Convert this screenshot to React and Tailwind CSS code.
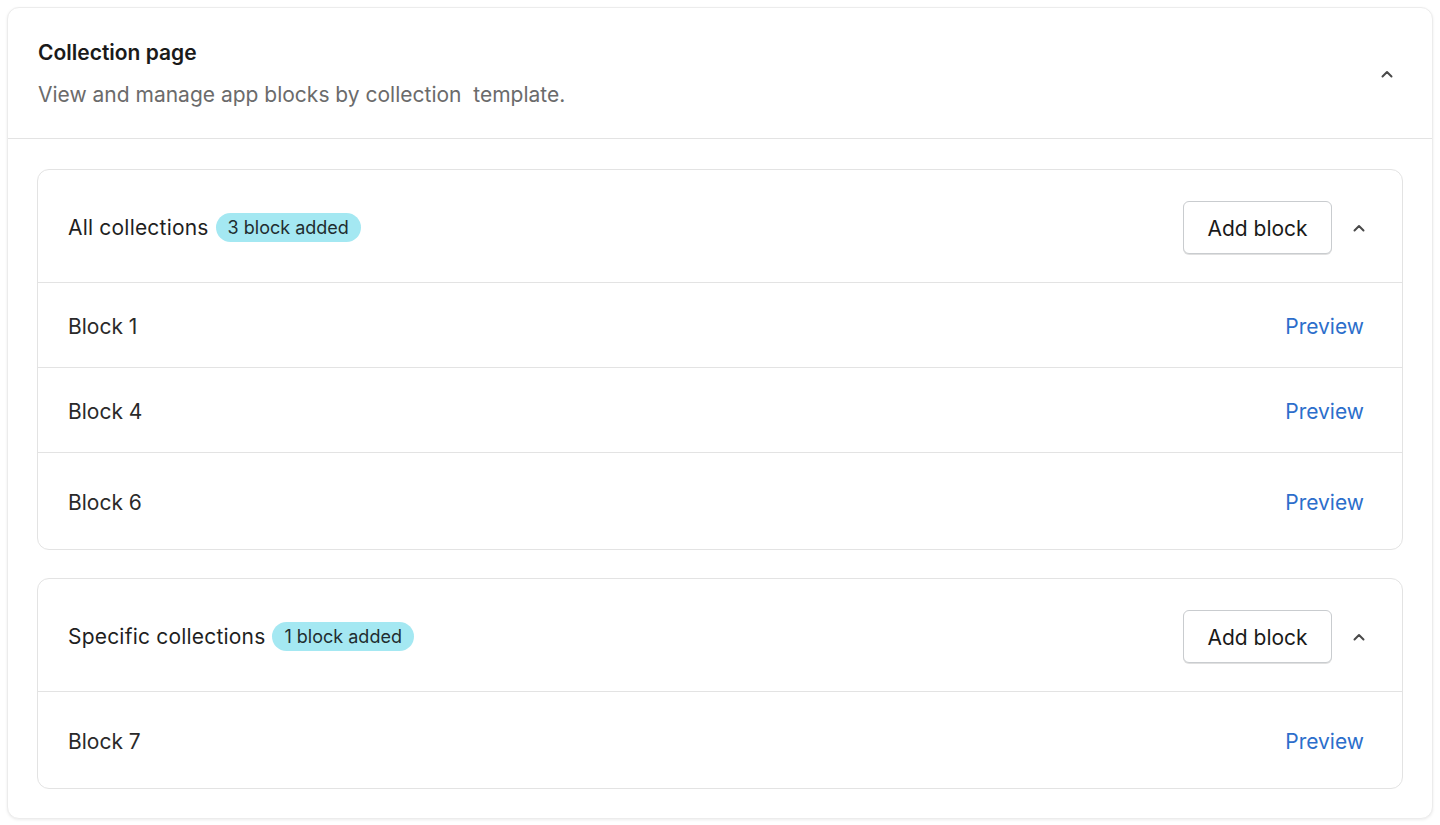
const blockGroups = [
  {
    id: "all",
    title: "All collections",
    badge: "3 block added",
    blocks: ["Block 1", "Block 4", "Block 6"],
  },
  {
    id: "specific",
    title: "Specific collections",
    badge: "1 block added",
    blocks: ["Block 7"],
  },
];

function ChevronUp({ className = "" }) {
  return (
    <svg
      className={className}
      width="14"
      height="14"
      viewBox="0 0 14 14"
      fill="none"
      stroke="currentColor"
      strokeWidth="2"
      strokeLinecap="round"
      strokeLinejoin="round"
    >
      <path d="M2.5 9.5 7 5l4.5 4.5" />
    </svg>
  );
}

function BlockGroup({ group }) {
  return (
    <div className="rounded-[12px] border border-[#e3e3e3] bg-white">
      {/* Group header */}
      <div className="flex h-[113px] items-center justify-between border-b border-[#e3e3e3] pl-[30px] pr-[36px] pt-[3px]">
        <div className="flex items-center gap-[7px]">
          <span className="text-[21px] leading-[28px] tracking-[0.2px] text-[#1f1f1f]">{group.title}</span>
          <span className="rounded-full bg-[#a4e8f2] px-[12px] text-[18px] leading-[29px] text-[#1f2d30]">
            {group.badge}
          </span>
        </div>
        <div className="flex items-center gap-[20px]">
          <button className="h-[53px] w-[149px] rounded-[6px] border border-[#c9cccf] bg-white pt-[2px] text-[21px] text-[#1a1a1a] shadow-[0_1px_0_rgba(0,0,0,0.12)]">
            Add block
          </button>
          <ChevronUp className="text-[#4a4a4a]" />
        </div>
      </div>

      {/* Block rows */}
      {group.blocks.map((name, i) => {
        const last = i === group.blocks.length - 1;
        return (
          <div
            key={name}
            className={`flex items-center justify-between pl-[30px] pr-[38px] pt-[3px] ${
              last ? "h-[96px]" : "h-[85px] border-b border-[#e3e3e3]"
            }`}
          >
            <span className="text-[21px] text-[#2a2a2a]">{name}</span>
            <a href="#" className="text-[21px] text-[#2c6ecb]">
              Preview
            </a>
          </div>
        );
      })}
    </div>
  );
}

export default function App() {
  return (
    <div className="min-h-screen bg-white p-[7px] font-['Inter',sans-serif]">
      <div className="rounded-[12px] border border-[#ececec] bg-white shadow-[0_1px_3px_rgba(0,0,0,0.08)]">
        {/* Section header */}
        <div className="flex items-center justify-between border-b border-[#e3e3e3] pl-[30px] pr-[38px] pt-[31px] pb-[29px]">
          <div>
            <h2 className="text-[21px] leading-[28px] font-semibold text-[#1a1a1a]">Collection page</h2>
            <p className="mt-[14px] text-[21px] leading-[28px] text-[#6b6b6b]">
              View and manage app blocks by collection{"\u00a0 "}template.
            </p>
          </div>
          <ChevronUp className="text-[#4a4a4a]" />
        </div>

        <div className="flex flex-col gap-[28px] px-[29px] pt-[30px] pb-[29px]">
          {blockGroups.map((group) => (
            <BlockGroup key={group.id} group={group} />
          ))}
        </div>
      </div>
    </div>
  );
}
